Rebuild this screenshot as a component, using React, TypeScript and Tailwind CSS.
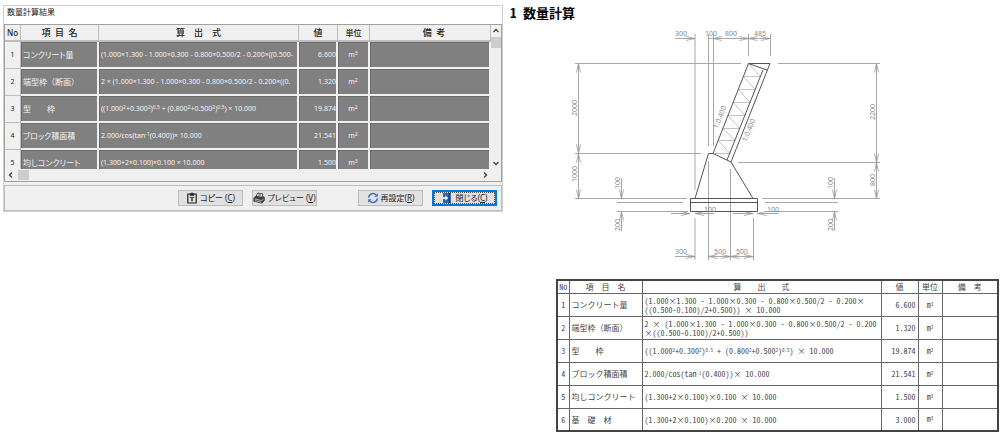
import type { ReactNode } from "react";

type Row = {
  no: number;
  name: string;
  formula: ReactNode;
  report: ReactNode;
  value: string;
  unit: 2 | 3;
};

const Sup = ({ children }: { children: ReactNode }) => (
  <span className="relative -top-[2px] text-[5px]">{children}</span>
);

const rows: Row[] = [
  {
    no: 1,
    name: "コンクリート量",
    formula: "(1.000×1.300 - 1.000×0.300 - 0.800×0.500/2 - 0.200×((0.500-",
    report: (
      <>
        (1.000×1.300 - 1.000×0.300 - 0.800×0.500/2 - 0.200×
        <br />
        ((0.500-0.100)/2+0.500)) × 10.000
      </>
    ),
    value: "6.600",
    unit: 3,
  },
  {
    no: 2,
    name: "端型枠（断面）",
    formula: "2 × (1.000×1.300 - 1.000×0.300 - 0.800×0.500/2 - 0.200×((0.",
    report: (
      <>
        2 × (1.000×1.300 - 1.000×0.300 - 0.800×0.500/2 - 0.200
        <br />
        ×((0.500-0.100)/2+0.500))
      </>
    ),
    value: "1.320",
    unit: 2,
  },
  {
    no: 3,
    name: "型　　枠",
    formula: (
      <>
        ((1.000<Sup>2</Sup>+0.300<Sup>2</Sup>)<Sup>0.5</Sup> + (0.800<Sup>2</Sup>+0.500<Sup>2</Sup>)
        <Sup>0.5</Sup>) × 10.000
      </>
    ),
    report: (
      <>
        ((1.000<Sup>2</Sup>+0.300<Sup>2</Sup>)<Sup>0.5</Sup> + (0.800<Sup>2</Sup>+0.500<Sup>2</Sup>)
        <Sup>0.5</Sup>) × 10.000
      </>
    ),
    value: "19.874",
    unit: 2,
  },
  {
    no: 4,
    name: "ブロック積面積",
    formula: (
      <>
        2.000/cos(tan<Sup>-1</Sup>(0.400))× 10.000
      </>
    ),
    report: (
      <>
        2.000/cos(tan<Sup>-1</Sup>(0.400))× 10.000
      </>
    ),
    value: "21.541",
    unit: 2,
  },
  {
    no: 5,
    name: "均しコンクリート",
    formula: "(1.300+2×0.100)×0.100 × 10.000",
    report: "(1.300+2×0.100)×0.100 × 10.000",
    value: "1.500",
    unit: 3,
  },
  {
    no: 6,
    name: "基　礎　材",
    formula: "(1.300+2×0.100)×0.200 × 10.000",
    report: "(1.300+2×0.100)×0.200 × 10.000",
    value: "3.000",
    unit: 3,
  },
];

const Unit = ({ power }: { power: 2 | 3 }) => (
  <>
    m<Sup>{power}</Sup>
  </>
);

const CopyIcon = () => (
  <svg viewBox="0 0 12 12" className="size-3 shrink-0" fill="none" stroke="#222" aria-hidden="true">
    <path d="M4 2H1.8v9h8.4V2H8" strokeWidth="1.2" />
    <path d="M4 3.4V1.6h1.2L6 .6l.8 1H8v1.8z" fill="#222" strokeWidth=".5" />
    <path d="M3.8 5.4h4.4M5 7h2M5 8.8h2M6 5.4v3.4" strokeWidth=".8" />
  </svg>
);

const PrinterIcon = () => (
  <svg viewBox="0 0 12 12" className="size-3 shrink-0" aria-hidden="true">
    <path d="M4.6 1 10 2 8.6 5.6 3 4.6z" fill="#fff" stroke="#222" strokeWidth=".8" />
    <path d="M5.3 2.4l3 .6M4.8 3.6l3 .5" stroke="#222" strokeWidth=".6" />
    <path d="M.8 5.8 3 4.2l6 1.2 1.7-1 .7 1v3L9 11.2.8 9.3z" fill="#444" stroke="#222" strokeWidth=".6" />
    <path d="M1.6 7l7 1.6 2-1.4M2 8.7l6.2 1.5" stroke="#ddd" strokeWidth=".7" fill="none" />
  </svg>
);

const RefreshIcon = () => (
  <svg viewBox="0 0 12 12" className="size-3 shrink-0" fill="none" stroke="#3f78b5" strokeWidth="1.5" aria-hidden="true">
    <path d="M1.6 5.6A4.4 4.4 0 0 1 9.4 3.2M10.4 6.4A4.4 4.4 0 0 1 2.6 8.8" />
    <path d="M10.9 1.2v3.6H7.3zM1.1 10.8V7.2h3.6z" fill="#3f78b5" stroke="none" />
  </svg>
);

const DoorIcon = () => (
  <svg viewBox="0 0 12 12" className="size-3 shrink-0" aria-hidden="true">
    <path d="M2 1h7.5v10H2z" fill="#2c6cae" />
    <path d="M7.5 1h2v10h-2z" fill="#173f68" />
    <path d="M2 5.2h2.4V3.4L7.2 6 4.4 8.6V6.8H2z" fill="#fff" />
  </svg>
);

const DialogButton = ({
  icon,
  label,
  hotkey,
  focused = false,
}: {
  icon: ReactNode;
  label: string;
  hotkey: string;
  focused?: boolean;
}) => (
  <button
    type="button"
    className={
      "flex h-4 w-[65px] items-center justify-center gap-0.5 whitespace-nowrap bg-[#e1e1e1] text-[8px] leading-3 " +
      (focused
        ? "border-2 border-[#0078d7] outline outline-dotted -outline-offset-3 outline-[#555]"
        : "border border-[#bcbcbc]")
    }
  >
    {icon}
    <span>
      {label}
      <span>
        (<u>{hotkey}</u>)
      </span>
    </span>
  </button>
);

const headCell = "border-r border-b-2 border-[#bdbdbd] p-0 font-medium";
const darkCell =
  "border-r-2 border-b-2 border-[#f0f0f0] bg-[#808080] p-0 shadow-[inset_1px_1px_0_#6c6c6c] overflow-hidden whitespace-nowrap";

const ResultDialog = () => (
  <section
    aria-label="数量計算結果"
    className="mt-[5px] mr-[3px] ml-[3px] min-w-0 flex-1 border border-[#d0d0d0] bg-[#f0f0f0] font-['Noto_Sans','Noto_Sans_CJK_JP',sans-serif] text-[#222]"
  >
    <h2 className="h-[18px] bg-white pl-[3px] text-[8px] leading-3 [font-feature-settings:'palt']">数量計算結果</h2>
    <div className="flex border border-[#a0a0a0]">
      <div className="min-w-0 flex-1">
        <div className="h-[144px] overflow-hidden">
          <table className="w-full table-fixed border-separate border-spacing-0 text-[7px] leading-[10px]">
            <colgroup>
              <col className="w-4" />
              <col className="w-[78px]" />
              <col className="w-[200px]" />
              <col className="w-[39px]" />
              <col className="w-8" />
              <col />
            </colgroup>
            <thead>
              <tr className="h-[17px] text-[9px]">
                <th className={headCell + " text-[8px]"}>No</th>
                <th className={headCell}>項&ensp;目&ensp;名</th>
                <th className={headCell}>算　出　式</th>
                <th className={headCell}>値</th>
                <th className={headCell + " text-[8px]"}>単位</th>
                <th className={headCell + " pl-2"}>備&ensp;考</th>
              </tr>
            </thead>
            <tbody>
              {rows.slice(0, 5).map((r) => (
                <tr key={r.no} className="h-[27px] text-[#f4f4f4]">
                  <th className="border-r border-b border-[#bdbdbd] p-0 font-normal text-[#222]">{r.no}</th>
                  <td
                    className={
                      darkCell + " pl-0.5 text-[8px] " + (r.name.includes("（") ? "" : "[font-feature-settings:'palt']")
                    }
                  >
                    {r.name}
                  </td>
                  <td className={darkCell + " pl-0.5"}>{r.formula}</td>
                  <td className={darkCell + " text-right"}>{r.value}</td>
                  <td className={darkCell + " text-center"}>
                    <Unit power={r.unit} />
                  </td>
                  <td className={darkCell} />
                </tr>
              ))}
            </tbody>
          </table>
        </div>
        <div className="flex h-3 items-center justify-between px-0.5">
          <div className="flex h-full items-center gap-[3px]">
            <svg viewBox="0 0 8 8" className="size-2" fill="none" stroke="#444" strokeWidth="1.3">
              <path d="M5 1.5 2.5 4 5 6.5" />
            </svg>
            <div className="h-[10px] w-[11px] bg-[#cdcdcd]" />
          </div>
          <svg viewBox="0 0 8 8" className="size-2" fill="none" stroke="#444" strokeWidth="1.3">
            <path d="M3 1.5 5.5 4 3 6.5" />
          </svg>
        </div>
      </div>
      <div className="flex h-[144px] w-[10px] flex-col items-center justify-between pt-0.5 pb-0.5">
        <div className="flex flex-col items-center gap-0.5">
          <svg viewBox="0 0 8 8" className="size-2" fill="none" stroke="#444" strokeWidth="1.3">
            <path d="M1.5 5 4 2.5 6.5 5" />
          </svg>
          <div className="h-[11px] w-[10px] bg-[#cdcdcd]" />
        </div>
        <svg viewBox="0 0 8 8" className="size-2" fill="none" stroke="#444" strokeWidth="1.3">
          <path d="M1.5 3 4 5.5 6.5 3" />
        </svg>
      </div>
    </div>
    <div className="mt-[3px] flex h-[26px] items-center justify-end border border-[#bdbdbd] pr-1 [font-feature-settings:'palt']">
      <div className="mr-[41px] flex gap-[9px]">
        <DialogButton icon={<CopyIcon />} label="コピー " hotkey="C" />
        <DialogButton icon={<PrinterIcon />} label="プレビュー " hotkey="V" />
      </div>
      <div className="flex gap-[9px]">
        <DialogButton icon={<RefreshIcon />} label="再設定" hotkey="R" />
        <DialogButton icon={<DoorIcon />} label="閉じる" hotkey="C" focused />
      </div>
    </div>
  </section>
);

/* Points are in drawing units; angle is the direction the head points to, in degrees. */
const heads: [number, number, number][] = [
  [695, 38.5, 0], [713, 38.5, 180], [748.5, 38.5, 0], [748.5, 38.5, 180], [770, 38.5, 0],
  [578.5, 63.5, -90], [578.5, 153.5, 90], [578.5, 153.5, -90], [578.5, 198.5, 90],
  [876.5, 63.5, -90], [876.5, 162.5, 90], [876.5, 162.5, -90], [876.5, 198.5, 90],
  [621.5, 198.5, 90], [621.5, 211.5, -90], [834.5, 198.5, 90], [834.5, 211.5, -90],
  [690, 213.5, 0], [695, 213.5, 180], [753, 213.5, 0], [757.5, 213.5, 180],
  [695, 256.5, 0], [708.5, 256.5, 180], [730.5, 256.5, 0], [730.5, 256.5, 180], [753, 256.5, 0],
];

const labels: [string, number, number, number][] = [
  ["300", 681, 36, 0], ["100", 711, 36, 0], ["800", 731, 36, 0], ["485", 760, 36, 0],
  ["2000", 577, 108, -90], ["1000", 577, 174, -90], ["2200", 875, 112, -90], ["800", 875, 180, -90],
  ["100", 620, 183, -90], ["200", 620, 225, -90], ["100", 833, 183, -90], ["200", 833, 225, -90],
  ["100", 710, 212, 0], ["100", 773, 212, 0],
  ["300", 681, 254, 0], ["500", 720, 254, 0], ["500", 742, 254, 0],
  ["1:0.400", 722, 118, -68], ["1:0.400", 751, 131, -68],
];

const braces = [63.5, 76.5, 89.5, 102.5, 115.5, 128.5, 140.5, 153.5];
const backFace = (y: number) => 748.5 - (y - 63.5) * 0.394;
const innerFace = (y: number) => 763 - (y - 70) * 0.394;

const SectionDrawing = () => (
  <svg
    viewBox="560 25 330 240"
    className="mt-1 ml-[54px] h-[240px] w-[330px]"
    fill="none"
    role="img"
    aria-label="断面図"
  >
    <path
      stroke="#a8a8a8"
      d="M675 38.5h20M708 38.5h62M695 34v156M708.5 34v112M713.5 34v112M748.5 34v22M770.5 34v22
         M575 63.5h166M778 63.5h102M578.5 63.5v135M575 153.5h126M575 198.5h112M617 202.5h66M617 211.5h71
         M738 162.5h142M762 198.5h118M765 202.5h73M765 211.5h73M876.5 63.5v135
         M621.5 178v20M621.5 211v20M834.5 178v20M834.5 211v20
         M671 213.5h19M695 213.5h19M733 213.5h20M757 213.5h21
         M708.5 161v99M730.5 169v91M753.5 218v42M695 218v42M675 256.5h20M708 256.5h45"
    />
    <g stroke="#999" strokeWidth=".8">
      {heads.map(([x, y, a], i) => (
        <path key={i} d="M-9 -2 0 0-9 2" transform={`translate(${x} ${y}) rotate(${a})`} />
      ))}
    </g>
    <g stroke="#bbb" strokeWidth=".9">
      {braces.slice(1).map((y, i) => (
        <path key={y} d={`M${backFace(braces[i])} ${braces[i]}L${innerFace(y)} ${y}H${backFace(y)}`} />
      ))}
    </g>
    <path
      stroke="#555"
      d="M690.5 198.5h67v13h-67zM690.5 202.5h67M695 198.5 708.5 153.5H713L731 162 753 198.5
         M713 153.5 748.5 63.5H770L731 162M748.5 63.5 767 70M763 70 727 160"
    />
    <g fill="#888" className="font-['Noto_Sans',sans-serif] text-[7px]" textAnchor="middle">
      {labels.map(([t, x, y, a], i) => (
        <text key={i} transform={`translate(${x} ${y}) rotate(${a})`}>
          {t}
        </text>
      ))}
    </g>
  </svg>
);

const cell = "border border-[#666] py-0";
const halfWidth = " [font-feature-settings:'hwid']";

const QuantityTable = () => (
  <table className="mt-[14px] ml-[50px] w-[443px] table-fixed border-collapse border-2 border-[#444] text-[8px] leading-[9px] text-[#444]">
    <colgroup>
      <col className="w-3" />
      <col className="w-[73px]" />
      <col />
      <col className="w-[37px]" />
      <col className="w-6" />
      <col className="w-14" />
    </colgroup>
    <thead>
      <tr className="h-[13px]">
        <th className={cell + " px-0 font-normal" + halfWidth}>No</th>
        <th className={cell + " px-0 font-normal"}>項　目　名</th>
        <th className={cell + " px-0 font-normal"}>算　　出　　式</th>
        <th className={cell + " px-0 font-normal"}>値</th>
        <th className={cell + " px-0 font-normal"}>単位</th>
        <th className={cell + " px-0 font-normal"}>備　考</th>
      </tr>
    </thead>
    <tbody>
      {rows.map((r) => (
        <tr key={r.no} className="h-[23px]">
          <td className={cell + " px-0 text-center" + halfWidth}>{r.no}</td>
          <td className={cell + " whitespace-nowrap px-0.5"}>{r.name}</td>
          <td className={cell + " whitespace-nowrap px-0.5" + halfWidth}>{r.report}</td>
          <td className={cell + " px-0.5 text-right" + halfWidth}>{r.value}</td>
          <td className={cell + " px-0 text-center" + halfWidth}>
            <Unit power={r.unit} />
          </td>
          <td className={cell} />
        </tr>
      ))}
    </tbody>
  </table>
);

export default function App() {
  return (
    <main lang="ja" className="flex items-start bg-white">
      <ResultDialog />
      <article className="w-[497px] shrink-0 pt-[5px] font-['Noto_Sans_CJK_JP',sans-serif]">
        <h1 className="pl-1 text-[13px] leading-4 font-bold text-black [font-feature-settings:'hwid']">1 数量計算</h1>
        <SectionDrawing />
        <QuantityTable />
      </article>
    </main>
  );
}
